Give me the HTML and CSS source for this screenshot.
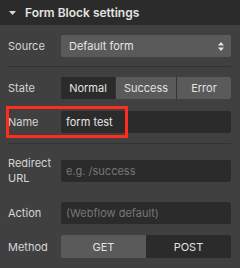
FILE: index.html
```html
<!DOCTYPE html>
<html lang="en">
<head>
    <meta charset="UTF-8">
    <title>Form Block settings</title>
    <link rel="stylesheet" href="styles.css">
</head>
<body>

    <div class="panel-head">
        <svg class="caret" width="7" height="4" viewBox="0 0 7 4"><path d="M0 0H7L3.5 4Z" fill="#d9d9d9"/></svg>
        <span>Form Block settings</span>
    </div>

    <div class="panel">
        <div class="row row-source">
            <label>Source</label>
            <div class="select">
                <span>Default form</span>
                <svg width="6" height="9" viewBox="0 0 6 9"><path d="M0 3.5L3 0L6 3.5Z M0 5.5H6L3 9Z" fill="#e6e6e6"/></svg>
            </div>
        </div>

        <div class="divider div-1"></div>

        <div class="row row-state">
            <label>State</label>
            <div class="segments three">
                <button class="seg active">Normal</button>
                <button class="seg">Success</button>
                <button class="seg">Error</button>
            </div>
        </div>

        <div class="row row-name">
            <label>Name</label>
            <div class="field">form test</div>
            <div class="highlight"></div>
        </div>

        <div class="divider div-2"></div>

        <div class="row row-redirect">
            <label class="two-line">Redirect<br>URL</label>
            <div class="field placeholder">e.g. /success</div>
        </div>

        <div class="row row-action">
            <label>Action</label>
            <div class="field placeholder">(Webflow default)</div>
        </div>

        <div class="row row-method">
            <label>Method</label>
            <div class="segments two">
                <button class="seg light">GET</button>
                <button class="seg active">POST</button>
            </div>
        </div>
    </div>

</body>
</html>
```

FILE: styles.css
```css
body {
    margin: 0;
    background: #404040;
    font-family: Inter, 'Liberation Sans', sans-serif;
    font-size: 11px;
    color: #d6d6d6;
    width: 240px;
    height: 268px;
    overflow: hidden;
}

.panel-head {
    height: 25px;
    background: #2b2b2b;
    display: flex;
    align-items: center;
    padding-left: 9px;
    gap: 9px;
    font-size: 12px;
    font-weight: 600;
    color: #e3e3e3;
}

.panel {
    padding: 0 9px 0 8px;
}

.row {
    display: flex;
    align-items: center;
    height: 22px;
    position: relative;
}

.row label {
    width: 53px;
    flex: none;
}

.row-source { margin-top: 10px; }
.row-state { margin-top: 10px; }
.row-name { margin-top: 12px; }
.row-redirect { margin-top: 12px; height: 30px; }
.row-action { margin-top: 16px; }
.row-method { margin-top: 11px; height: 23px; }

.two-line {
    line-height: 15px;
}

.divider {
    height: 1px;
    background: #333;
}

.div-1 { margin-top: 9px; }
.div-2 { margin-top: 10px; }

.select {
    flex: 1;
    height: 22px;
    background: #5a5a5a;
    border-radius: 2px;
    display: flex;
    align-items: center;
    justify-content: space-between;
    padding: 0 7px 0 8px;
    color: #e6e6e6;
}

.field {
    flex: 1;
    height: 22px;
    background: #2b2b2b;
    border-radius: 2px;
    display: flex;
    align-items: center;
    padding-left: 5px;
    color: #e6e6e6;
}

.field.placeholder {
    color: #777;
}

.segments {
    flex: 1;
    height: 100%;
    display: grid;
    gap: 1px;
    background: #333;
    border-radius: 2px;
    overflow: hidden;
}

.segments.three { grid-template-columns: 54fr 60fr 54fr; }
.segments.two { grid-template-columns: 1fr 1fr; gap: 0; }

.seg {
    border: none;
    margin: 0;
    padding: 0;
    font: inherit;
    color: #e3e3e3;
    background: #5a5a5a;
}

.seg.active {
    background: #2b2b2b;
}

.seg.light {
    background: #5a5a5a;
}

.highlight {
    position: absolute;
    left: -2px;
    top: -5px;
    width: 116px;
    height: 26px;
    border: 3px solid #ff2d1f;
}
```
